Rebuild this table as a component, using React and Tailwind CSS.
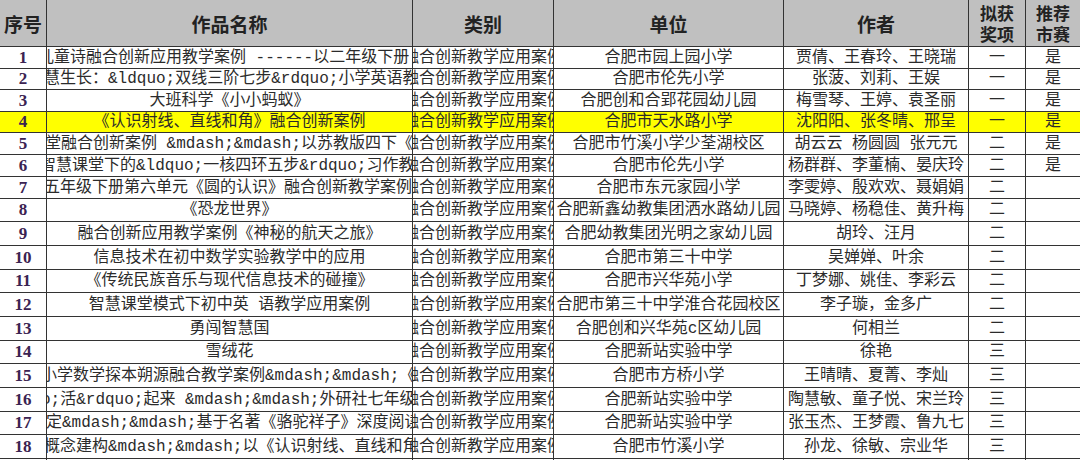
import React from 'react';

const cols = 'grid grid-cols-[47px_366px_141px_230px_185px_57px_54px]';
const cell = 'flex items-center overflow-hidden border-r border-b border-[#333] whitespace-nowrap';

const rows = [
  { n: 1, h: 'h-[22px]', title: '儿童诗融合创新应用教学案例 ------以二年级下册《', clip: 'ml-[-9px]', unit: '合肥市园上园小学', author: '贾倩、王春玲、王晓瑞', award: '一', rec: '是' },
  { n: 2, h: 'h-[21px]', title: '慧生长：&ldquo;双线三阶七步&rdquo;小学英语教学', clip: 'ml-[-3px]', unit: '合肥市伦先小学', author: '张菠、刘莉、王娱', award: '一', rec: '是' },
  { n: 3, h: 'h-[22px]', title: '大班科学《小小蚂蚁》', unit: '合肥创和合郢花园幼儿园', author: '梅雪琴、王婷、袁圣丽', award: '一', rec: '是' },
  { n: 4, h: 'h-[21px]', title: '《认识射线、直线和角》融合创新案例', unit: '合肥市天水路小学', author: '沈阳阳、张冬晴、邢呈', award: '一', rec: '是', hl: true },
  { n: 5, h: 'h-[22px]', title: '堂融合创新案例 &mdash;&mdash;以苏教版四下《平', clip: 'ml-[-2px]', unit: '合肥市竹溪小学少荃湖校区', author: '胡云云 杨圆圆 张元元', award: '二', rec: '是' },
  { n: 6, h: 'h-[22px]', title: '智慧课堂下的&ldquo;一核四环五步&rdquo;习作教学', clip: 'ml-[-7px]', unit: '合肥市伦先小学', author: '杨群群、李董楠、晏庆玲', award: '二', rec: '是' },
  { n: 7, h: 'h-[22px]', title: '五年级下册第六单元《圆的认识》融合创新教学案例', clip: 'ml-[-3px]', unit: '合肥市东元家园小学', author: '李雯婷、殷欢欢、聂娟娟', award: '二', rec: '' },
  { n: 8, h: 'h-[23px]', title: '《恐龙世界》', unit: '合肥新鑫幼教集团洒水路幼儿园', author: '马晓婷、杨稳佳、黄升梅', award: '二', rec: '' },
  { n: 9, h: 'h-[24px]', title: '融合创新应用教学案例《神秘的航天之旅》', unit: '合肥幼教集团光明之家幼儿园', author: '胡玲、汪月', award: '二', rec: '' },
  { n: 10, h: 'h-[24px]', title: '信息技术在初中数学实验教学中的应用', unit: '合肥市第三十中学', author: '吴婵婵、叶余', award: '二', rec: '' },
  { n: 11, h: 'h-[23px]', title: '《传统民族音乐与现代信息技术的碰撞》', unit: '合肥市兴华苑小学', author: '丁梦娜、姚佳、李彩云', award: '二', rec: '' },
  { n: 12, h: 'h-[24px]', title: '智慧课堂模式下初中英 语教学应用案例', unit: '合肥市第三十中学淮合花园校区', author: '李子璇，金多广', award: '二', rec: '' },
  { n: 13, h: 'h-[24px]', title: '勇闯智慧国', unit: '合肥创和兴华苑c区幼儿园', author: '何相兰', award: '二', rec: '' },
  { n: 14, h: 'h-[23px]', title: '雪绒花', unit: '合肥新站实验中学', author: '徐艳', award: '三', rec: '' },
  { n: 15, h: 'h-[24px]', title: '小学数学探本朔源融合教学案例&mdash;&mdash;《平', clip: 'ml-[-6px]', unit: '合肥市方桥小学', author: '王晴晴、夏菁、李灿', award: '三', rec: '' },
  { n: 16, h: 'h-[24px]', title: 'o;活&rdquo;起来 &mdash;&mdash;外研社七年级 下', clip: 'ml-[-6px]', unit: '合肥新站实验中学', author: '陶慧敏、童子悦、宋兰玲', award: '三', rec: '' },
  { n: 17, h: 'h-[23px]', title: '定&mdash;&mdash;基于名著《骆驼祥子》深度阅读', clip: 'ml-[-1px]', unit: '合肥新站实验中学', author: '张玉杰、王梦霞、鲁九七', award: '三', rec: '' },
  { n: 18, h: 'h-[24px]', title: '概念建构&mdash;&mdash;以《认识射线、直线和角', clip: 'ml-[-3px]', unit: '合肥市竹溪小学', author: '孙龙、徐敏、宗业华', award: '三', rec: '' },
  { n: 19, h: 'h-[23px]', title: '数学融合创新教学案例《分数的初步认识》', unit: '合肥市师范附属小学', author: '王芳、李娜、陈静', award: '三', rec: '' },
];

const HeaderCell = ({ children }) => (
  <div className={`${cell} justify-center`}>{children}</div>
);

export default function App() {
  return (
    <div className="w-[1080px] h-[460px] overflow-hidden bg-white text-[#2b2b2b]">
      {/* Header row */}
      <div className={`${cols} h-[47px] bg-[#c0c0c0] font-['Noto_Sans_CJK_SC',sans-serif] font-bold text-[#222]`}>
        <HeaderCell><span className="text-[19px] leading-none">序号</span></HeaderCell>
        <HeaderCell><span className="text-[19px] leading-none">作品名称</span></HeaderCell>
        <HeaderCell><span className="text-[19px] leading-none">类别</span></HeaderCell>
        <HeaderCell><span className="text-[19px] leading-none">单位</span></HeaderCell>
        <HeaderCell><span className="text-[19px] leading-none">作者</span></HeaderCell>
        <HeaderCell>
          <span className="text-[17px] leading-[21px] text-center whitespace-normal">拟获<br />奖项</span>
        </HeaderCell>
        <div className="flex items-center justify-center overflow-hidden border-b border-[#333]">
          <span className="text-[17px] leading-[21px] text-center">推荐<br />市赛</span>
        </div>
      </div>

      {/* Data rows */}
      {rows.map((r) => (
        <div
          key={r.n}
          className={`${cols} ${r.h} ${r.hl ? 'bg-[#ffff00]' : 'bg-white'} font-['Liberation_Mono','Noto_Sans_CJK_SC',monospace] text-[16px] leading-[20px]`}
        >
          <div className={`${cell} justify-center`}>
            <span className="font-['Liberation_Serif',serif] font-bold text-[17px] text-[#3b2352]">{r.n}</span>
          </div>
          <div className={`${cell} ${r.clip ? 'justify-start' : 'justify-center'}`}>
            <span className={`shrink-0 ${r.clip || ''}`}>{r.title}</span>
          </div>
          <div className={`${cell} justify-center`}>
            <span className="shrink-0">融合创新教学应用案例</span>
          </div>
          <div className={`${cell} justify-center`}>
            <span className="shrink-0">{r.unit}</span>
          </div>
          <div className={`${cell} justify-center`}>
            <span className="shrink-0">{r.author}</span>
          </div>
          <div className={`${cell} justify-center`}>{r.award}</div>
          <div className="flex items-center justify-center overflow-hidden border-b border-[#333]">{r.rec}</div>
        </div>
      ))}
    </div>
  );
}
